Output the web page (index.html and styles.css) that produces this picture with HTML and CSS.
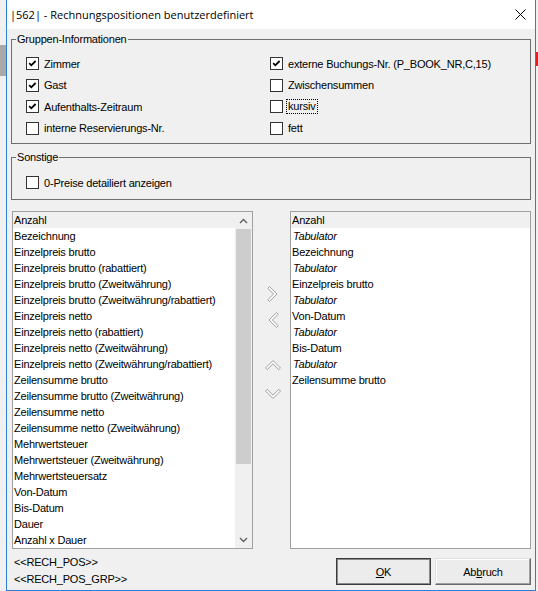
FILE: index.html
```html
<!DOCTYPE html>
<html lang="de">
<head>
<meta charset="utf-8">
<title>Rechnungspositionen benutzerdefiniert</title>
<link rel="stylesheet" href="styles.css">
</head>
<body>
<div class="screen">
  <div class="bg-left"><div class="bg-block"></div></div>
  <div class="window">
    <div class="titlebar">
      <span class="title">|562| - Rechnungspositionen benutzerdefiniert</span>
      <svg class="close" width="11" height="11" viewBox="0 0 11 11"><path d="M0.5 0.5 L10.5 10.5 M10.5 0.5 L0.5 10.5" stroke="#000" stroke-width="1" fill="none"/></svg>
    </div>
    <div class="client">
      <div class="group g1">
        <span class="group-label">Gruppen-Informationen</span>
        <div class="checks">
          <div class="check"><span class="box on"><svg viewBox="0 0 11 11" width="11" height="11"><path d="M2.2 5.2 L4.3 7.3 L8.6 3" stroke="#000" stroke-width="1.8" fill="none"/></svg></span><span>Zimmer</span></div>
          <div class="check"><span class="box on"><svg viewBox="0 0 11 11" width="11" height="11"><path d="M2.2 5.2 L4.3 7.3 L8.6 3" stroke="#000" stroke-width="1.8" fill="none"/></svg></span><span>Gast</span></div>
          <div class="check"><span class="box on"><svg viewBox="0 0 11 11" width="11" height="11"><path d="M2.2 5.2 L4.3 7.3 L8.6 3" stroke="#000" stroke-width="1.8" fill="none"/></svg></span><span>Aufenthalts-Zeitraum</span></div>
          <div class="check"><span class="box"></span><span>interne Reservierungs-Nr.</span></div>
          <div class="check"><span class="box on"><svg viewBox="0 0 11 11" width="11" height="11"><path d="M2.2 5.2 L4.3 7.3 L8.6 3" stroke="#000" stroke-width="1.8" fill="none"/></svg></span><span>externe Buchungs-Nr. (P_BOOK_NR,C,15)</span></div>
          <div class="check"><span class="box"></span><span>Zwischensummen</span></div>
          <div class="check"><span class="box"></span><span class="focus">kursiv</span></div>
          <div class="check"><span class="box"></span><span>fett</span></div>
        </div>
      </div>
      <div class="group g2">
        <span class="group-label">Sonstige</span>
        <div class="check"><span class="box"></span><span>0-Preise detailiert anzeigen</span></div>
      </div>
      <div class="lists">
        <div class="listbox">
          <div class="items">
            <div class="item sel">Anzahl</div>
            <div class="item">Bezeichnung</div>
            <div class="item">Einzelpreis brutto</div>
            <div class="item">Einzelpreis brutto (rabattiert)</div>
            <div class="item">Einzelpreis brutto (Zweitwährung)</div>
            <div class="item">Einzelpreis brutto (Zweitwährung/rabattiert)</div>
            <div class="item">Einzelpreis netto</div>
            <div class="item">Einzelpreis netto (rabattiert)</div>
            <div class="item">Einzelpreis netto (Zweitwährung)</div>
            <div class="item">Einzelpreis netto (Zweitwährung/rabattiert)</div>
            <div class="item">Zeilensumme brutto</div>
            <div class="item">Zeilensumme brutto (Zweitwährung)</div>
            <div class="item">Zeilensumme netto</div>
            <div class="item">Zeilensumme netto (Zweitwährung)</div>
            <div class="item">Mehrwertsteuer</div>
            <div class="item">Mehrwertsteuer (Zweitwährung)</div>
            <div class="item">Mehrwertsteuersatz</div>
            <div class="item">Von-Datum</div>
            <div class="item">Bis-Datum</div>
            <div class="item">Dauer</div>
            <div class="item">Anzahl x Dauer</div>
          </div>
          <div class="scrollbar">
            <div class="sb-btn"><svg width="9" height="6" viewBox="0 0 9 6"><path d="M1 5 L4.5 1.5 L8 5" stroke="#606060" stroke-width="1.4" fill="none"/></svg></div>
            <div class="thumb"></div>
            <div class="sb-track"></div>
            <div class="sb-btn"><svg width="9" height="6" viewBox="0 0 9 6"><path d="M1 1 L4.5 4.5 L8 1" stroke="#606060" stroke-width="1.4" fill="none"/></svg></div>
          </div>
        </div>
        <div class="movers">
          <svg class="mv-right" width="12" height="16" viewBox="0 0 12 16"><path d="M2.5 0.5 L10 8 L2.5 15.5 L0.8 13.8 L6.6 8 L0.8 2.2 Z" stroke="#a2a2a2" stroke-width="1" fill="#fbfbfb"/></svg>
          <svg class="mv-left" width="12" height="16" viewBox="0 0 12 16"><path d="M9.5 0.5 L2 8 L9.5 15.5 L11.2 13.8 L5.4 8 L11.2 2.2 Z" stroke="#a2a2a2" stroke-width="1" fill="#fbfbfb"/></svg>
          <svg class="mv-up" width="16" height="12" viewBox="0 0 16 12"><path d="M0.5 9 L8 1.5 L15.5 9 L13.8 10.7 L8 4.9 L2.2 10.7 Z" stroke="#a2a2a2" stroke-width="1" fill="#fbfbfb"/></svg>
          <svg class="mv-down" width="16" height="12" viewBox="0 0 16 12"><path d="M0.5 3 L8 10.5 L15.5 3 L13.8 1.3 L8 7.1 L2.2 1.3 Z" stroke="#a2a2a2" stroke-width="1" fill="#fbfbfb"/></svg>
        </div>
        <div class="listbox">
          <div class="items">
            <div class="item sel">Anzahl</div>
            <div class="item tab">Tabulator</div>
            <div class="item">Bezeichnung</div>
            <div class="item tab">Tabulator</div>
            <div class="item">Einzelpreis brutto</div>
            <div class="item tab">Tabulator</div>
            <div class="item">Von-Datum</div>
            <div class="item tab">Tabulator</div>
            <div class="item">Bis-Datum</div>
            <div class="item tab">Tabulator</div>
            <div class="item">Zeilensumme brutto</div>
          </div>
        </div>
      </div>
      <div class="footer">
        <div class="tags">
          <div>&lt;&lt;RECH_POS&gt;&gt;</div>
          <div>&lt;&lt;RECH_POS_GRP&gt;&gt;</div>
        </div>
        <div class="buttons">
          <button class="btn ok"><u>O</u>K</button>
          <button class="btn cancel">Ab<u>b</u>ruch</button>
        </div>
      </div>
    </div>
  </div>
  <div class="bg-right"><div class="bg-red"></div></div>
</div>
</body>
</html>
```
FILE: styles.css
```css
* { box-sizing: border-box; }
html, body { margin: 0; padding: 0; }
body {
  width: 538px;
  height: 591px;
  overflow: hidden;
  background: #f0f0f0;
  font-family: "Liberation Sans", Arial, sans-serif;
  font-size: 11px;
  letter-spacing: -0.2px;
  color: #000;
}
.screen { display: flex; width: 538px; height: 591px; }
.bg-left { width: 6px; flex: none; background: #f0f0f0; display: flex; flex-direction: column; }
.bg-block { margin-top: 45px; height: 31px; background: #a9a9a9; }
.bg-right { width: 2px; flex: none; background: #f0f0f0; display: flex; flex-direction: column; }
.bg-red { margin-top: 52px; height: 14px; background: #e02020; }

.window {
  width: 530px;
  height: 591px;
  flex: none;
  border: 1px solid #2b7fd6;
  border-top: 0;
  background: #f0f0f0;
  display: flex;
  flex-direction: column;
}
.titlebar {
  height: 29px;
  flex: none;
  background: #fff;
  display: flex;
  align-items: center;
  justify-content: space-between;
  padding: 0 9px 0 3px;
}
.title { font-family: "Open Sans", "Liberation Sans", sans-serif; font-size: 11px; letter-spacing: 0; }
.close { display: block; }

.client { flex: 1; display: flex; flex-direction: column; padding: 0 4px; }

.group { position: relative; border: 1px solid #6f6f6f; }
.group-label {
  position: absolute;
  top: -7px;
  left: 4px;
  line-height: 13px;
  padding: 0 1px;
  background: #f0f0f0;
}
.g1 { margin-top: 10px; height: 105px; padding: 17px 0 0 14px; }
.g2 { margin-top: 13px; height: 43px; padding: 18px 0 0 14px; }

.checks {
  display: grid;
  grid-template-columns: 244px 1fr;
  grid-template-rows: repeat(4, 21.67px);
  grid-auto-flow: column;
}
.check { display: flex; align-items: center; height: 13px; gap: 5px; white-space: nowrap; }
.box {
  width: 13px;
  height: 13px;
  flex: none;
  border: 1px solid #333;
  background: #fff;
  display: flex;
}
.box svg { display: block; }
.focus { outline: 1px dotted #000; padding: 0 1px; line-height: 13px; margin-left: -1px; }

.lists { margin-top: 11px; margin-left: 1px; height: 338px; display: flex; }
.listbox {
  width: 241px;
  height: 338px;
  flex: none;
  border: 1px solid #a0a0a0;
  background: #fff;
  display: flex;
}
.items { flex: 1; min-width: 0; }
.item { height: 16px; line-height: 16px; padding-left: 1px; white-space: nowrap; }
.item.sel { background: #f0f0f0; }
.item.tab { font-style: italic; padding-left: 2px; }

.scrollbar { width: 17px; flex: none; background: #f0f0f0; display: flex; flex-direction: column; }
.sb-btn { height: 17px; flex: none; display: flex; align-items: center; justify-content: center; }
.thumb { height: 235px; flex: none; margin: 0 1px; background: #cdcdcd; }
.sb-track { flex: 1; }

.movers { width: 37px; flex: none; display: flex; flex-direction: column; align-items: center; padding-left: 2px; }
.movers svg { display: block; }
.mv-right { margin-top: 75px; }
.mv-left { margin-top: 10px; }
.mv-up { margin-top: 31px; }
.mv-down { margin-top: 17px; }

.footer { flex: 1; display: flex; justify-content: space-between; }
.tags { padding: 5px 0 0 3px; line-height: 17px; }
.buttons { display: flex; gap: 4px; padding-top: 9px; }
.btn {
  height: 27px;
  font: inherit;
  letter-spacing: -0.2px;
  color: #000;
  padding: 0;
  background: #ececec;
}
.btn u { text-decoration: underline; }
.ok {
  width: 95px;
  border: 1px solid #3c3c3c;
  box-shadow: inset 1px 1px 0 #8a8a8a, inset -1px -1px 0 #8a8a8a;
}
.cancel {
  width: 96px;
  border: 1px solid;
  border-color: #e0e0e0 #6a6a6a #6a6a6a #e0e0e0;
  box-shadow: inset -1px -1px 0 #a0a0a0, inset 1px 1px 0 #fff;
}
```
